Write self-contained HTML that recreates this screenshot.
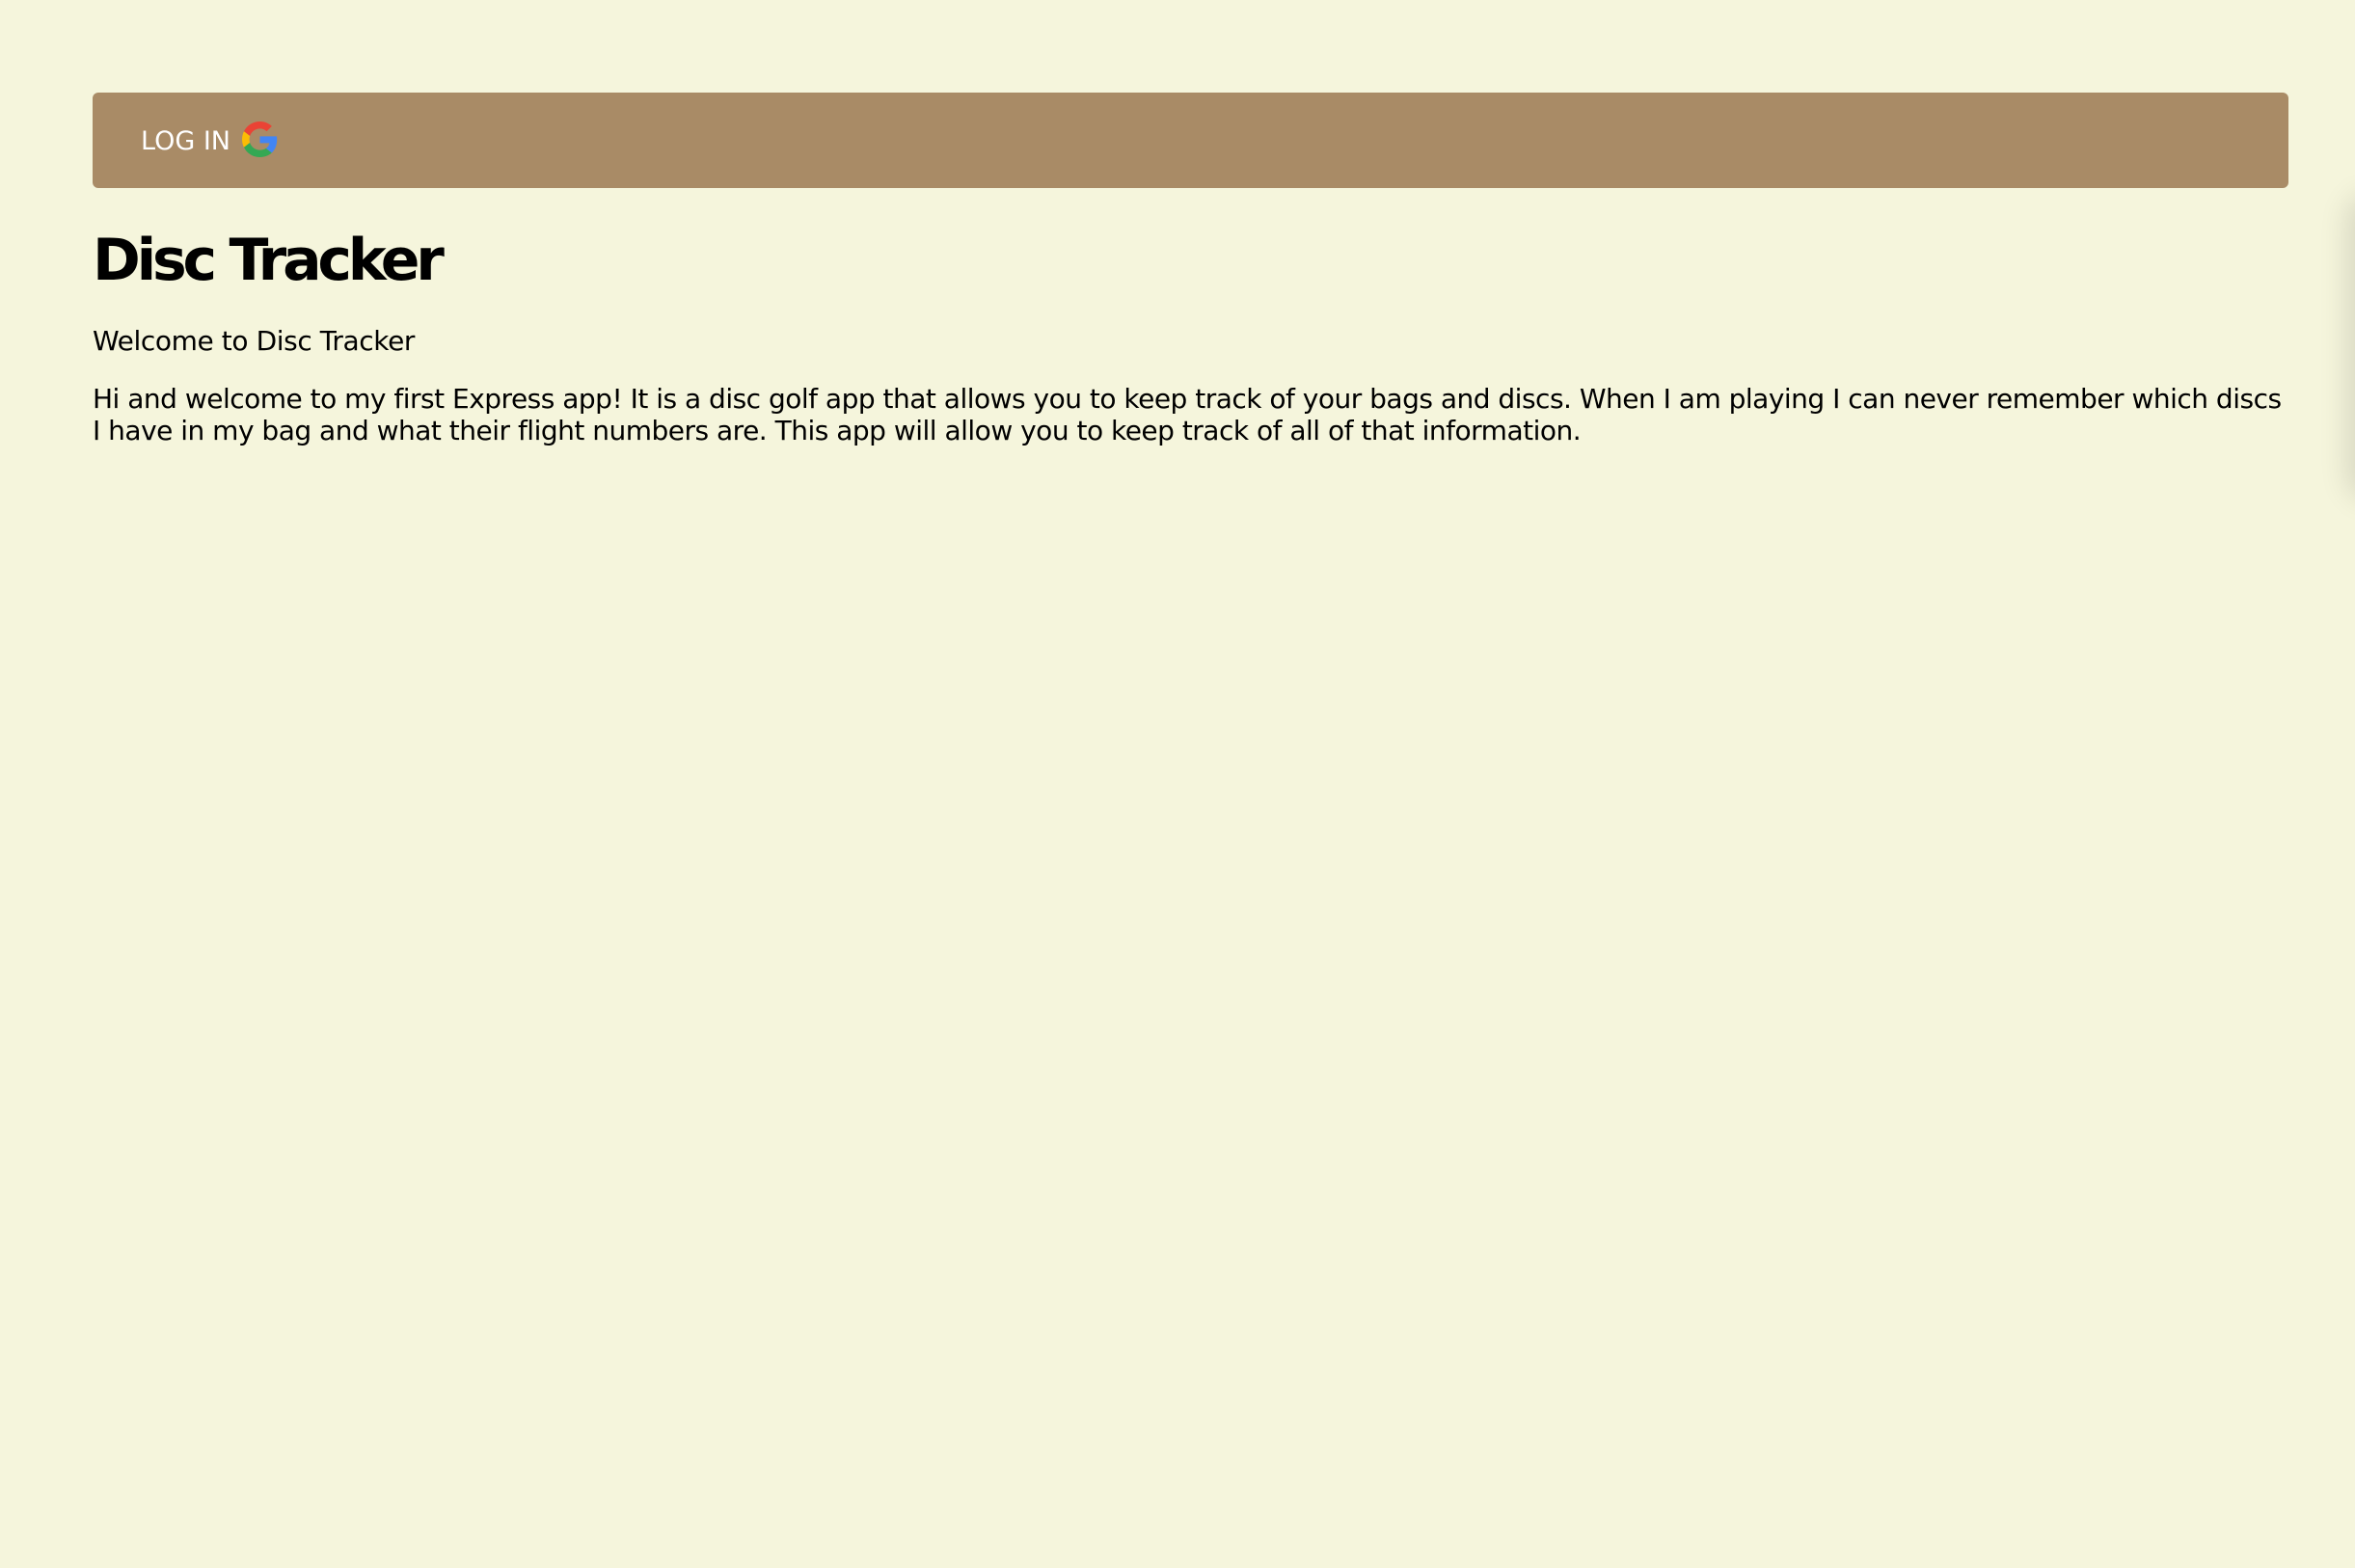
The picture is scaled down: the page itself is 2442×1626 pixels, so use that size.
<!DOCTYPE html>
<html><head><meta charset="utf-8"><style>
html,body{margin:0;padding:0;}
body{width:2442px;height:1626px;background:#f5f5dc;position:relative;overflow:hidden;font-family:"DejaVu Sans","Liberation Sans",sans-serif;color:#000;}
.nav{position:absolute;left:96px;top:96px;width:2277px;height:99px;background:#a98b66;border-radius:6px;}
.t{position:absolute;white-space:nowrap;line-height:1;}
.shadow{position:absolute;right:-30px;top:210px;width:30px;height:300px;box-shadow:0 0 30px 8px rgba(0,0,0,0.12);border-radius:20px;}
</style></head><body>
<div class="nav"></div>
<div class="t" style="left:146px;top:133px;font-size:27px;color:#fff;">LOG IN</div>
<svg style="position:absolute;left:251px;top:126px" width="37" height="37" viewBox="0 0 48 48">
<path fill="#EA4335" d="M24 9.5c3.540 0 6.710 1.220 9.210 3.600l6.850-6.850C35.900 2.380 30.470 0 24 0 14.620 0 6.510 5.380 2.560 13.220l7.980 6.190C12.430 13.720 17.740 9.500 24 9.500z"/>
<path fill="#4285F4" d="M46.98 24.55c0-1.57-.15-3.09-.38-4.55H24v9.02h12.94c-.58 2.96-2.26 5.48-4.78 7.18l7.73 6c4.51-4.18 7.090-10.36 7.090-17.65z"/>
<path fill="#FBBC05" d="M10.53 28.59c-.48-1.45-.76-2.99-.76-4.59s.27-3.14.76-4.59l-7.98-6.19C.92 16.46 0 20.12 0 24c0 3.88.92 7.54 2.56 10.78l7.97-6.19z"/>
<path fill="#34A853" d="M24 48c6.48 0 11.93-2.13 15.89-5.81l-7.73-6c-2.15 1.45-4.92 2.3-8.16 2.3-6.26 0-11.57-4.22-13.47-9.91l-7.98 6.19C6.51 42.62 14.62 48 24 48z"/>
</svg>
<div class="t" style="left:96px;top:240px;font-size:60px;font-weight:bold;letter-spacing:-4.2px;">Disc Tracker</div>
<div class="t" style="left:96px;top:340px;font-size:28px;letter-spacing:-0.4px;">Welcome to Disc Tracker</div>
<div class="t" style="left:96px;top:397px;font-size:28px;line-height:33px;letter-spacing:-0.5px;">Hi and welcome to my first Express app! It is a disc golf app that allows you to keep track of your bags and discs. When I am playing I can never remember which discs<br>I have in my bag and what their flight numbers are. This app will allow you to keep track of all of that information.</div>
<div class="shadow"></div>
</body></html>
